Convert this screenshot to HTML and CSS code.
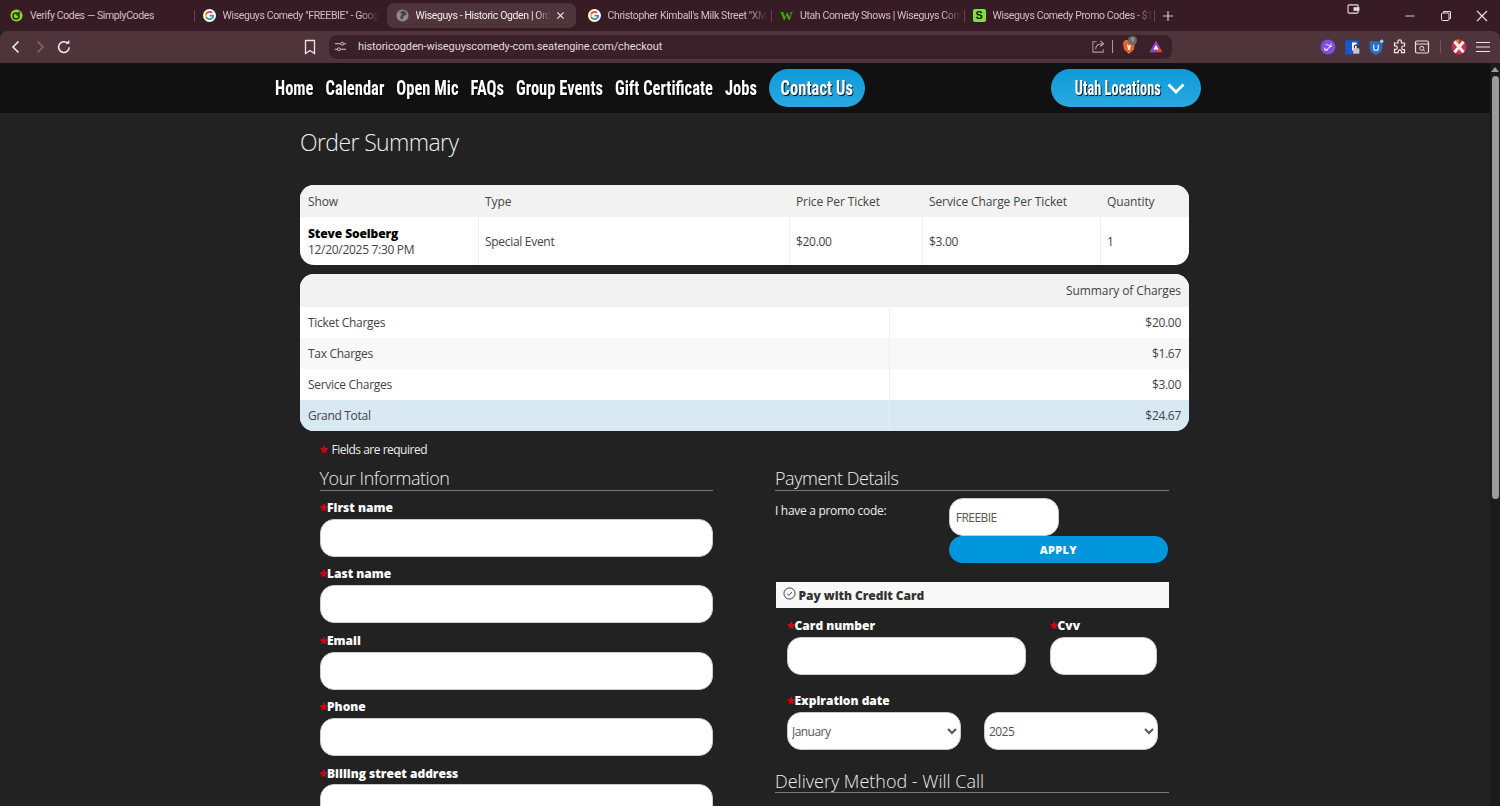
FILE: index.html
```html
<!DOCTYPE html>
<html lang="en">
<head>
<meta charset="utf-8">
<title>Wiseguys - Historic Ogden | Order</title>
<link rel="stylesheet" href="styles.css">
</head>
<body>
<svg class="defs" width="0" height="0" aria-hidden="true">
  <symbol id="g" viewBox="0 0 48 48">
    <circle cx="24" cy="24" r="24" fill="#fff"/>
    <path fill="#ea4335" d="M24 14c2.800 0 5 1 6.800 2.600l5-5C32.600 8.600 28.600 7 24 7 17.400 7 11.700 10.800 9 16.300l5.900 4.500C16.300 16.900 19.800 14 24 14z"/>
    <path fill="#4285f4" d="M40.700 24.500c0-1.200-.1-2.300-.3-3.500H24v6.600h9.400c-.4 2.100-1.600 3.900-3.500 5.200l5.700 4.400c3.300-3.100 5.100-7.500 5.100-12.700z"/>
    <path fill="#fbbc05" d="M14.900 27.200c-.3-1-.5-2.100-.5-3.200s.2-2.200.5-3.200L9 16.300C7.700 18.600 7 21.200 7 24s.7 5.400 2 7.700l5.900-4.500z"/>
    <path fill="#34a853" d="M24 41c4.600 0 8.400-1.500 11.600-4.200l-5.700-4.400c-1.600 1.100-3.600 1.700-5.900 1.700-4.200 0-7.700-2.900-9.100-6.800L9 31.700C11.700 37.200 17.400 41 24 41z"/>
  </symbol>
</svg>

<div class="browser">
  <div class="tabstrip">
    <div class="tab">
      <svg class="favicon" viewBox="0 0 14 14"><circle cx="7" cy="7" r="6.500" fill="#8fd62a"/><circle cx="6.500" cy="7.500" r="3.200" fill="none" stroke="#23301a" stroke-width="1.600"/><path d="M7 7l4-4" stroke="#23301a" stroke-width="1.600"/></svg>
      <span class="tab-title plain">Verify Codes — SimplyCodes</span>
    </div>
    <div class="tab sep">
      <svg class="favicon"><use href="#g"/></svg>
      <span class="tab-title">Wiseguys Comedy "FREEBIE" - Goog</span>
    </div>
    <div class="tab active">
      <svg class="favicon" viewBox="0 0 14 14"><circle cx="7" cy="7" r="6.500" fill="#8f8a8e"/><path d="M3 3.500c2 0 3 1 3 2S4 8 5 11c2 0 3-1 3-2.500s2-1 3.500-2.500c0-2-1-3.500-3.500-4.500-1 1-3 1-5 2z" fill="#4d4349"/></svg>
      <span class="tab-title">Wiseguys - Historic Ogden | Ord</span>
      <svg class="tab-close" viewBox="0 0 10 10"><path d="M1.500 1.500l7 7M8.500 1.500l-7 7" stroke="#efe8ea" stroke-width="1.300"/></svg>
    </div>
    <div class="tab">
      <svg class="favicon"><use href="#g"/></svg>
      <span class="tab-title">Christopher Kimball's Milk Street "XM</span>
    </div>
    <div class="tab sep">
      <span class="fav-w">W</span>
      <span class="tab-title">Utah Comedy Shows | Wiseguys Com</span>
    </div>
    <div class="tab sep">
      <span class="fav-s">S</span>
      <span class="tab-title">Wiseguys Comedy Promo Codes - $1</span>
    </div>
    <div class="tab-new">
      <svg viewBox="0 0 12 12"><path d="M6 1v10M1 6h10" stroke="#cfc3c6" stroke-width="1.200"/></svg>
    </div>
    <div class="window-controls">
      <svg class="wallet" viewBox="0 0 14 11"><rect x="1" y="1" width="11" height="9" rx="1" fill="none" stroke="#e8dfe1" stroke-width="1.200"/><rect x="7" y="3.500" width="6.500" height="4" fill="#e8dfe1"/></svg>
      <svg class="winbtn" viewBox="0 0 12 12"><path d="M1.500 6h9" stroke="#d9cfd2"/></svg>
      <svg class="winbtn" viewBox="0 0 12 12"><rect x="1.500" y="3" width="7.500" height="7.500" rx="1" fill="none" stroke="#e8dfe1"/><path d="M3.500 3V1.500h7v7H9" fill="none" stroke="#e8dfe1"/></svg>
      <svg class="winbtn" viewBox="0 0 12 12"><path d="M1 1l10 10M11 1L1 11" stroke="#efe8ea" stroke-width="1.100"/></svg>
    </div>
  </div>

  <div class="toolbar">
    <svg class="nav-btn" viewBox="0 0 16 16"><path d="M10.500 2.500L5 8l5.500 5.500" fill="none" stroke="#f2ecee" stroke-width="1.600"/></svg>
    <svg class="nav-btn dim" viewBox="0 0 16 16"><path d="M5.500 2.500L11 8l-5.500 5.500" fill="none" stroke="#7f676d" stroke-width="1.500"/></svg>
    <svg class="nav-btn" viewBox="0 0 16 16"><path d="M13.200 8.200A5.300 5.300 0 1 1 11.600 4.300" fill="none" stroke="#f2ecee" stroke-width="1.500"/><path d="M9.500 4.800h3.800V1z" fill="#f2ecee"/></svg>
    <svg class="bookmark" viewBox="0 0 14 16"><path d="M2.500 1.500h9v13L7 11.500l-4.500 3z" fill="none" stroke="#ece5e7" stroke-width="1.300"/></svg>
    <div class="urlbar">
      <svg class="tune" viewBox="0 0 14 14"><path d="M1 4h6M10.500 4H13M1 10h2.500M7 10h6" stroke="#d8cdd0" stroke-width="1.100"/><circle cx="8.800" cy="4" r="1.600" fill="none" stroke="#d8cdd0"/><circle cx="5.200" cy="10" r="1.600" fill="none" stroke="#d8cdd0"/></svg>
      <span class="url">historicogden-wiseguyscomedy-com.seatengine.com/checkout</span>
      <svg class="share" viewBox="0 0 16 16"><path d="M6 3H2v11h11v-3" fill="none" stroke="#a89a9e" stroke-width="1.100"/><path d="M5 11c0-4 3-6 7-6M10 2l3.500 3L10 8" fill="none" stroke="#bdb0b3" stroke-width="1.100"/></svg>
      <span class="url-sep"></span>
      <span class="brave">
        <svg viewBox="0 0 14 16"><path d="M3 1h8l2 2.500-1 7L7 15 2 10.500l-1-7z" fill="#e8622a"/><path d="M5 5l2 2 2-2-1 6H6z" fill="#fff"/></svg>
        <span class="badge">1</span>
      </span>
      <svg class="rewards" viewBox="0 0 16 14"><path d="M8 .5l7.500 13H.5z" fill="#e2463f"/><path d="M8 .5l3.800 6.700L8 13.500H.5z" fill="#8a3fd1"/><path d="M8 5l3 5.500H5z" fill="#fff"/></svg>
    </div>
    <div class="extensions">
      <span class="ext"><svg viewBox="0 0 14 14"><circle cx="7" cy="7" r="6.500" fill="#7b4fe0"/><path d="M3.500 9.500c2.500.5 5.500-2 6.500-5.500M5 5c2-1 3 2 5.500 1.500M4 7.500a2 2 0 0 0 3 2" stroke="#e5d9ff" fill="none"/></svg></span>
      <span class="ext"><svg viewBox="0 0 14 14"><path d="M1 1h12v9l-6 3.500H1z" fill="#1d56c9"/><path d="M7 3h4v5l-2 2H7z" fill="#fff"/><path d="M9 8V6.800a1.500 1.500 0 0 1 3 0V8" fill="none" stroke="#3b2b31"/><rect x="8" y="8" width="5.500" height="5" rx="1" fill="#c9c4c6"/></svg></span>
      <span class="ext"><svg viewBox="0 0 14 14"><path d="M1.500 2h11v6c0 3-3 5-5.500 6C4.500 13 1.500 11 1.500 8z" fill="#2a6fc4"/><path d="M5 5v3.500c0 2 4 2 4 0V5" stroke="#cfe4fb" stroke-width="1.200" fill="none"/><circle cx="12" cy="2" r="1.500" fill="#9fd0f7"/></svg></span>
      <span class="ext"><svg viewBox="0 0 16 16"><path d="M6 2.500a1.700 1.700 0 0 1 3.400 0V4h3.100v3h-1a1.800 1.800 0 0 0 0 3.600h1v3H9.500v-1a1.700 1.700 0 0 0-3.400 0v1H2.500v-3.200h1a1.800 1.800 0 0 0 0-3.600h-1V4H6z" fill="none" stroke="#f0e9eb" stroke-width="1.200"/></svg></span>
      <span class="ext tight"><svg viewBox="0 0 16 16"><rect x="1.500" y="2" width="13" height="12" rx="1.500" fill="none" stroke="#e8dfe1" stroke-width="1.200"/><path d="M1.500 5h13" stroke="#e8dfe1"/><circle cx="7.800" cy="9.300" r="2" fill="none" stroke="#e8dfe1"/><path d="M9.300 10.800l1.500 1.300" stroke="#e8dfe1"/></svg></span>
      <span class="ext-sep"></span>
      <span class="ext"><svg viewBox="0 0 14 14"><circle cx="7" cy="7" r="6.500" fill="#c8324f"/><path d="M7 7L2 2.200A6.500 6.500 0 0 1 7 .5z" fill="#d9822b"/><path d="M3 2.500l8 9M11 2.500l-8 9" stroke="#f4eded" stroke-width="2.600"/></svg></span>
      <svg class="menu" viewBox="0 0 14 12"><path d="M0 1.500h14M0 6h14M0 10.500h14" stroke="#ece5e7" stroke-width="1.200"/></svg>
    </div>
  </div>

  <div class="viewport">
    <main class="page">
      <nav class="site-nav">
        <div class="nav-links">
          <div class="nav-links-inner">
            <a class="nav-link">Home</a>
            <a class="nav-link">Calendar</a>
            <a class="nav-link">Open Mic</a>
            <a class="nav-link">FAQs</a>
            <a class="nav-link">Group Events</a>
            <a class="nav-link">Gift Certificate</a>
            <a class="nav-link">Jobs</a>
          </div>
        </div>
        <a class="nav-pill contact"><span class="narrow">Contact Us</span></a>
        <a class="nav-pill locations"><span class="narrow">Utah Locations</span>
          <svg viewBox="0 0 18 11"><path d="M1.500 1.500L9 9l7.500-7.500" fill="none" stroke="#fff" stroke-width="2.800"/></svg>
        </a>
      </nav>

      <div class="content">
        <h1>Order Summary</h1>

        <table class="card order">
          <thead>
            <tr><th class="c-show">Show</th><th class="c-type">Type</th><th class="c-price">Price Per Ticket</th><th class="c-charge">Service Charge Per Ticket</th><th>Quantity</th></tr>
          </thead>
          <tbody>
            <tr>
              <td><strong>Steve Soelberg</strong><br>12/20/2025 7:30 PM</td>
              <td>Special Event</td>
              <td>$20.00</td>
              <td>$3.00</td>
              <td>1</td>
            </tr>
          </tbody>
        </table>

        <table class="card summary">
          <thead>
            <tr><th class="c-label"></th><th class="num">Summary of Charges</th></tr>
          </thead>
          <tbody>
            <tr><td>Ticket Charges</td><td class="num">$20.00</td></tr>
            <tr class="odd"><td>Tax Charges</td><td class="num">$1.67</td></tr>
            <tr><td>Service Charges</td><td class="num">$3.00</td></tr>
            <tr class="total"><td>Grand Total</td><td class="num">$24.67</td></tr>
          </tbody>
        </table>

        <p class="required-note"><span class="star note-star">*</span>Fields are required</p>

        <div class="form-cols">
          <section class="col">
            <h2>Your Information</h2>
            <div class="field"><label><span class="star">*</span>First name</label><input type="text"></div>
            <div class="field"><label><span class="star">*</span>Last name</label><input type="text"></div>
            <div class="field"><label><span class="star">*</span>Email</label><input type="text"></div>
            <div class="field"><label><span class="star">*</span>Phone</label><input type="text"></div>
            <div class="field"><label><span class="star">*</span>Billing street address</label><input type="text"></div>
          </section>

          <section class="col">
            <h2>Payment Details</h2>
            <div class="promo">
              <span class="promo-label">I have a promo code:</span>
              <div class="promo-box">
                <input class="promo-input" type="text" value="FREEBIE">
                <button class="apply" type="button">APPLY</button>
              </div>
            </div>
            <div class="pay-head">
              <svg viewBox="0 0 14 14"><circle cx="7" cy="7" r="6" fill="none" stroke="#333" stroke-width="1"/><path d="M4.500 7.200l1.800 1.800 3.300-3.600" fill="none" stroke="#333"/></svg>
              <span>Pay with Credit Card</span>
            </div>
            <div class="card-grid">
              <div class="f-number"><label><span class="star">*</span>Card number</label><input type="text"></div>
              <div class="f-cvv"><label><span class="star">*</span>Cvv</label><input type="text"></div>
            </div>
            <div class="expiry">
              <label><span class="star">*</span>Expiration date</label>
              <div class="expiry-row">
                <select><option>January</option></select>
                <select><option>2025</option></select>
              </div>
            </div>
            <h2 class="delivery">Delivery Method - Will Call</h2>
          </section>
        </div>
      </div>
    </main>
    <div class="scrollbar">
      <span class="arrow"></span>
      <span class="thumb"></span>
    </div>
  </div>
</div>
</body>
</html>
```
FILE: styles.css
```css
* { box-sizing: border-box; }
html, body { margin: 0; height: 806px; overflow: hidden; }
body { font-family: "Open Sans", "Noto Sans", sans-serif; font-size: 12px; letter-spacing: -.3px; background: #222; color: #e8e8e8; }
.defs { position: absolute; }
.browser { display: flex; flex-direction: column; height: 806px; }

/* tab strip */
.tabstrip { height: 31px; flex: none; display: flex; align-items: flex-start; padding: 3px 0 0 1px; background: #381c25; color: #cdc1c4; font-family: Roboto, sans-serif; font-size: 10.500px; letter-spacing: -.37px; }
.tab { width: 192.500px; height: 25px; display: flex; align-items: center; padding: 0 8px 0 9px; position: relative; flex: none; border-radius: 7px; }
.tab.sep::before { content: ""; position: absolute; left: 0; top: 7px; height: 12px; width: 1px; background: #5c444b; }
.tab.active { width: 189px; margin: 0 2.500px 0 1px; padding: 0 11px 0 8.500px; background: #50343b; color: #f2ecee; }
.favicon { width: 13px; height: 13px; flex: none; margin-right: 7px; }
.tab-title { white-space: nowrap; -webkit-mask-image: linear-gradient(90deg, #000 88%, transparent); mask-image: linear-gradient(90deg, #000 88%, transparent); }
.tab-title.plain { -webkit-mask-image: none; mask-image: none; }
.tab-close { width: 9px; height: 9px; margin-left: auto; flex: none; }
.fav-w { width: 13px; margin-right: 7px; flex: none; color: #46a80f; font: bold 13px "Liberation Serif", serif; }
.fav-s { width: 13px; height: 13px; margin-right: 7px; flex: none; background: #7ee03a; color: #16210c; font: bold 11px/13px "Liberation Sans", sans-serif; text-align: center; border-radius: 2px; }
.tab-new { width: 12px; height: 12px; margin: 6.500px 0 0 6px; flex: none; display: flex; position: relative; }
.tab-new::before { content: ""; position: absolute; left: -8px; top: 0; height: 12px; width: 1px; background: #5c444b; }
.window-controls { margin-left: auto; align-self: stretch; display: flex; align-items: center; position: relative; }
.wallet { position: absolute; left: -57px; top: 1px; width: 13px; height: 10px; }
.winbtn { width: 12px; height: 12px; margin-right: 24px; margin-top: -3px; }
.winbtn:last-child { margin-right: 12px; }

/* toolbar */
.toolbar { height: 32px; flex: none; display: flex; align-items: center; background: #50343b; padding: 0 0 1px 8px; border-radius: 8px 8px 0 0; }
.nav-btn { width: 16px; height: 16px; margin-right: 8px; flex: none; }
.bookmark { width: 14px; height: 16px; margin-left: 223px; flex: none; }
.urlbar { width: 843px; height: 24px; margin-left: 12px; flex: none; background: #3a2029; border-radius: 8px; display: flex; align-items: center; padding-left: 5px; color: #e3dadc; }
.tune { width: 13px; height: 13px; flex: none; }
.url { margin-left: 11px; font-family: Roboto, sans-serif; font-size: 11px; letter-spacing: -.1px; white-space: nowrap; flex: 1; }
.share { width: 15px; height: 15px; flex: none; }
.url-sep { width: 1px; height: 13px; margin: 0 9px 0 6px; background: #a89a9e; flex: none; }
.brave { width: 14px; height: 16px; flex: none; position: relative; display: flex; }
.badge { position: absolute; left: 6px; top: -3px; width: 9px; height: 9px; border-radius: 50%; background: #6b6a70; color: #eee; font-size: 6px; line-height: 9px; text-align: center; }
.rewards { width: 14px; height: 13px; margin: 0 9px 0 13px; flex: none; }
.extensions { display: flex; align-items: center; margin-left: 148px; flex: 1; }
.ext { width: 16px; height: 16px; margin-right: 8px; display: flex; flex: none; }
.ext.tight { margin-left: -2px; margin-right: 10px; }
.ext-sep { width: 1px; height: 13px; margin: 0 10px 0 0; background: #6d555b; flex: none; }
.menu { width: 14px; height: 12px; margin-left: 1px; flex: none; }

/* viewport */
.viewport { flex: 1; min-height: 0; display: flex; }
.page { flex: 1; min-width: 0; overflow: hidden; background: #222; }
.scrollbar { width: 10px; flex: none; background: #1b1b1b; padding: 4px 2px 0; display: flex; flex-direction: column; align-items: center; }
.arrow { width: 0; height: 0; border: 4px solid transparent; border-top: 0; border-bottom: 5px solid #9b9b9b; }
.thumb { width: 7px; height: 423px; margin-top: 4px; border-radius: 4px; background: #9b9b9b; }

/* site nav */
.site-nav { height: 50px; background: #111; display: flex; align-items: center; padding-left: 275px; gap: 13px; }
.nav-links { width: 481px; flex: none; }
.nav-links-inner { display: flex; gap: 15.200px; width: 620px; transform: scaleX(.787); transform-origin: left center; }
.nav-link, .nav-pill { font-family: "Roboto Condensed", Roboto, sans-serif; font-weight: 700; font-size: 21px; letter-spacing: 0; color: #fff; text-shadow: 1px 1px 1px #000; white-space: nowrap; }
.narrow { display: inline-block; transform: scaleX(.79); }
.nav-pill { flex: none; height: 38px; border-radius: 19px; background: linear-gradient(#0e9ad9, #2aa9e0); display: flex; align-items: center; justify-content: center; }
.contact { width: 96px; }
.locations { width: 150px; margin-left: 173px; font-size: 20px; padding-left: 8px; }
.locations .narrow { transform: scaleX(.72); margin: 0 -17px; }
.locations svg { width: 18px; height: 11px; margin-left: 7px; }

/* content */
.content { width: 889px; margin-left: 300px; }
h1 { margin: 0; padding-top: 13px; height: 72px; font-size: 23px; letter-spacing: -.6px; line-height: 32px; font-weight: 300; color: #eee; }
.card { width: 100%; border-collapse: separate; border-spacing: 0; table-layout: fixed; background: #fff; color: #444; border-radius: 14px; overflow: hidden; }
.card th { background: #f2f2f2; height: 32px; padding: 0 8px; font-weight: 400; text-align: left; font-size: 12px; letter-spacing: -.1px; }
.card th + th { padding-left: 7px; }
.card td { padding: 1px 8px 0; border-left: 1px solid #eee; font-size: 12px; }
.card td + td { padding-left: 6px; }
.card td:first-child { border-left: 0; }
.c-show { width: 178px; }
.c-type { width: 311px; }
.c-price { width: 133px; }
.c-charge { width: 178px; }
.order td { height: 48px; line-height: 16px; }
.order strong { font-weight: 800; color: #000; letter-spacing: -.1px; }
.summary { margin-top: 9px; }
.summary th { height: 33px; }
.summary .c-label { width: 589px; }
.summary td { height: 31px; padding-top: 0; }
.card .num { text-align: right; }
.summary .odd td { background: #f8f8f8; }
.summary .total td { background: #d9e9f3; border-color: #e6f0f6; }

/* form */
.required-note { margin: 0; height: 36px; padding: 10px 0 0 20px; line-height: 17px; letter-spacing: -.5px; color: #eee; }
.star { color: #d8000c; font-weight: 800; font-size: 14px; line-height: 0; vertical-align: -3px; letter-spacing: 0; }
.note-star { margin-right: 4px; }
.form-cols { display: flex; padding-left: 19.500px; gap: 62px; }
.col { flex: none; width: 393.500px; }
h2 { margin: 0; height: 24px; font-size: 18px; letter-spacing: -.45px; line-height: 22px; font-weight: 300; color: #eee; border-bottom: 1px solid #777; }
label { display: block; font-size: 12px; letter-spacing: 0; line-height: 17px; font-weight: 800; color: #fff; }
input, select { display: block; width: 100%; height: 38px; padding: 0 6px; border: 1px solid #ccc; border-radius: 14px; background: #fff; font: 400 12px "Open Sans", sans-serif; letter-spacing: -.55px; color: #555; }
.field { height: 66.400px; padding-top: 8px; }
.field label { margin-bottom: 2.800px; }
.promo { display: flex; padding-top: 7px; }
.promo-label { width: 174px; line-height: 26px; color: #eee; }
.promo-box { width: 220px; }
.promo-input { width: 110px; }
.apply { display: block; width: 219px; height: 27px; border: 0; border-radius: 14px; background: #0096db; color: #fff; font: 800 11px "Open Sans", sans-serif; letter-spacing: .3px; }
.pay-head { margin: 19px -.5px 0 .5px; height: 26px; background: #f8f8f8; color: #333; display: flex; align-items: center; gap: 3px; padding: 1px 0 0 7px; font-weight: 800; font-size: 12px; letter-spacing: -.05px; }
.pay-head svg { width: 13px; height: 13px; margin-top: -4px; }
.card-grid { display: flex; margin: 9px 0 0 12px; gap: 24px; }
.f-number { width: 239px; }
.f-cvv { width: 107px; }
.card-grid label, .expiry label { margin-bottom: 3px; }
.expiry { margin: 17px 0 0 12px; width: 371px; }
.expiry-row { display: flex; gap: 23px; }
.expiry-row select { flex: 1; min-width: 0; padding: 0; }
.delivery { margin-top: 20px; height: 23px; letter-spacing: 0; }
```
